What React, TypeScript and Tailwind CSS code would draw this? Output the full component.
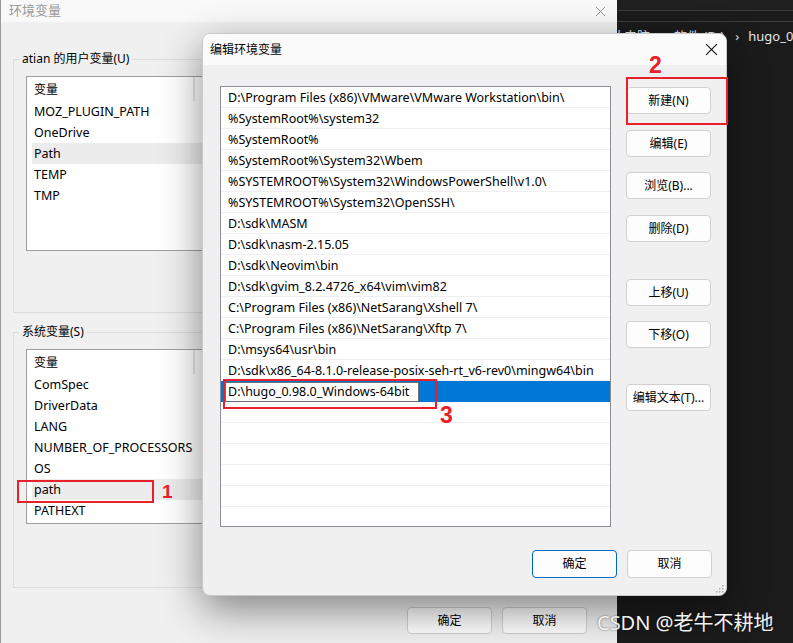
import React from "react";

const userVars = ["MOZ_PLUGIN_PATH", "OneDrive", "Path", "TEMP", "TMP"];
const sysVars = ["ComSpec", "DriverData", "LANG", "NUMBER_OF_PROCESSORS", "OS", "path", "PATHEXT"];

const paths = [
  "D:\\Program Files (x86)\\VMware\\VMware Workstation\\bin\\",
  "%SystemRoot%\\system32",
  "%SystemRoot%",
  "%SystemRoot%\\System32\\Wbem",
  "%SYSTEMROOT%\\System32\\WindowsPowerShell\\v1.0\\",
  "%SYSTEMROOT%\\System32\\OpenSSH\\",
  "D:\\sdk\\MASM",
  "D:\\sdk\\nasm-2.15.05",
  "D:\\sdk\\Neovim\\bin",
  "D:\\sdk\\gvim_8.2.4726_x64\\vim\\vim82",
  "C:\\Program Files (x86)\\NetSarang\\Xshell 7\\",
  "C:\\Program Files (x86)\\NetSarang\\Xftp 7\\",
  "D:\\msys64\\usr\\bin",
  "D:\\sdk\\x86_64-8.1.0-release-posix-seh-rt_v6-rev0\\mingw64\\bin",
];

function CloseIcon({ color, size }: { color: string; size: number }) {
  return (
    <svg width={size} height={size} viewBox="0 0 12 12">
      <path d="M1 1 L11 11 M11 1 L1 11" stroke={color} strokeWidth="1" fill="none" />
    </svg>
  );
}

function VarList({ items, selected }: { items: string[]; selected: string }) {
  return (
    <div className="mt-[9px] ml-[12px] w-[565px] h-[175px] bg-white border border-[#a0a0a0] overflow-hidden text-[12.5px]">
      {/* 表头 */}
      <div className="h-[24px] flex">
        <div className="w-[168px] h-full flex items-center pl-[7px] pt-[1px] border-r-2 border-[#e6e6e6] text-[12px]">变量</div>
      </div>
      {items.map((name) => (
        <div
          key={name}
          className={`h-[21px] ml-[5px] pl-[2px] pt-[2px] flex items-center ${name === selected ? "bg-[#ececec]" : ""}`}
        >
          {name}
        </div>
      ))}
    </div>
  );
}

function WinButton({ label, primary, className = "" }: { label: string; primary?: boolean; className?: string }) {
  return (
    <div
      className={`w-[85px] h-[27px] rounded-[4px] bg-[#fdfdfd] flex items-center justify-center text-[12px] text-black border ${
        primary ? "border-[#0067c0]" : "border-[#d0d0d0]"
      } ${className}`}
    >
      {label}
    </div>
  );
}

export default function App() {
  return (
    <div className="relative w-[793px] h-[643px] overflow-hidden bg-[#f0f0f0] text-[12px] text-black font-['Segoe_UI','Noto_Sans','Noto_Sans_CJK_SC',sans-serif]">
      {/* 背景：环境变量窗口 */}
      <div className="absolute left-0 top-0 w-[617px] h-[643px] bg-[#f0f0f0] flex flex-col border-l border-[#9a9a9a]">
        <div className="h-[22px] bg-[#f9f9f9] flex items-center justify-between pl-[8px] pr-[11px]">
          <span className="text-[13px] text-[#9a9a9a]">环境变量</span>
          <CloseIcon color="#8a8a8a" size={11} />
        </div>

        <fieldset className="mt-[29px] ml-[12px] w-[591px] h-[262px] border border-[#dcdcdc]">
          <legend className="ml-[5px] px-[3px] leading-[16px]">atian 的用户变量(U)</legend>
          <VarList items={userVars} selected="Path" />
        </fieldset>

        <fieldset className="mt-[11px] ml-[12px] w-[591px] h-[264px] border border-[#dcdcdc]">
          <legend className="ml-[5px] px-[3px] leading-[16px]">系统变量(S)</legend>
          <VarList items={sysVars} selected="path" />
        </fieldset>

        <div className="mt-[19px] flex justify-end gap-[10px] pr-[30px]">
          <WinButton label="确定" className="bg-[#f7f7f7] border-[#c4c4c4]" />
          <WinButton label="取消" className="bg-[#f7f7f7] border-[#c4c4c4]" />
        </div>
      </div>

      {/* 右侧深色资源管理器 */}
      <div className="absolute left-[617px] top-0 w-[176px] h-[643px] bg-[#1b1b1b] overflow-hidden">
        <div className="h-[11px] bg-[#202020] border-b border-[#3c3c3c]" />
        <div className="h-[11px] border-b border-[#3c3c3c]" />
        <div className="mt-[5px] -ml-[6px] flex items-center whitespace-nowrap text-[13px] text-[#e6e6e6] font-['Noto_Sans','Noto_Sans_CJK_SC',sans-serif]">
          <span>此电脑</span>
          <span className="ml-[10px]">›</span>
          <span className="ml-[10px]">软件 (D:)</span>
          <span className="ml-[11px]">›</span>
          <span className="ml-[9px]">hugo_0.98.0_Windows-64bit</span>
        </div>
      </div>

      {/* 编辑环境变量 对话框 */}
      <div className="absolute left-[202px] top-[33px] w-[525px] h-[563px] rounded-[8px] bg-[#f0f0f0] border border-[#c9c9c9] overflow-hidden shadow-[0_14px_40px_rgba(0,0,0,0.45)] flex flex-col">
        <div className="h-[31px] bg-[#fbfbfb] flex items-center justify-between pl-[7px] pr-[8px]">
          <span className="text-[12px]">编辑环境变量</span>
          <CloseIcon color="#111" size={13} />
        </div>

        <div className="flex pl-[17px] pt-[21px]">
          <div className="w-[391px] h-[441px] bg-white border border-[#8a8e96] overflow-hidden text-[12.5px]">
            {paths.map((p) => (
              <div key={p} className="h-[21px] border-b border-[#efefef] flex items-center pl-[7px] pt-[2px] whitespace-nowrap">
                {p}
              </div>
            ))}
            {/* 正在编辑的行 */}
            <div className="h-[21px] bg-[#0078d7] flex items-center pl-[4px]">
              <div className="w-[194px] h-[20px] bg-white border border-[#6e6e6e] flex items-center pl-[2px] pt-[2px]">
                D:\hugo_0.98.0_Windows-64bit
              </div>
            </div>
            {Array.from({ length: 6 }).map((_, i) => (
              <div key={i} className="h-[21px] border-b border-[#efefef]" />
            ))}
          </div>

          <div className="ml-[15px] pt-[1px] flex flex-col">
            <WinButton label="新建(N)" />
            <WinButton label="编辑(E)" className="mt-[16px]" />
            <WinButton label="浏览(B)..." className="mt-[15px]" />
            <WinButton label="删除(D)" className="mt-[16px]" />
            <WinButton label="上移(U)" className="mt-[37px]" />
            <WinButton label="下移(O)" className="mt-[15px]" />
            <WinButton label="编辑文本(T)..." className="mt-[36px]" />
          </div>
        </div>

        <div className="mt-[23px] flex justify-end gap-[10px] pr-[14px]">
          <WinButton label="确定" primary className="h-[28px]" />
          <WinButton label="取消" className="h-[28px]" />
        </div>

        <svg className="absolute right-[2px] bottom-[2px]" width="8" height="8" viewBox="0 0 8 8">
          <rect x="6" y="0" width="1.5" height="1.5" fill="#a8a8a8" />
          <rect x="3" y="3" width="1.5" height="1.5" fill="#a8a8a8" />
          <rect x="6" y="3" width="1.5" height="1.5" fill="#a8a8a8" />
          <rect x="0" y="6" width="1.5" height="1.5" fill="#a8a8a8" />
          <rect x="3" y="6" width="1.5" height="1.5" fill="#a8a8a8" />
          <rect x="6" y="6" width="1.5" height="1.5" fill="#a8a8a8" />
        </svg>
      </div>

      {/* 红色标注 */}
      <div className="absolute left-[17px] top-[480px] w-[137px] h-[23px] border-2 border-[#e8202a]" />
      <div className="absolute left-[162px] top-[478px] text-[19px] leading-[28px] font-bold text-[#e8202a] font-['Liberation_Sans',sans-serif]">1</div>
      <div className="absolute left-[626px] top-[77px] w-[102px] h-[48px] border-2 border-[#e8202a]" />
      <div className="absolute left-[649px] top-[50px] text-[23px] leading-[30px] font-bold text-[#e8202a] font-['Liberation_Sans',sans-serif]">2</div>
      <div className="absolute left-[223px] top-[379px] w-[214px] h-[30px] border-2 border-[#e8202a]" />
      <div className="absolute left-[440px] top-[400px] text-[23px] leading-[30px] font-bold text-[#e8202a] font-['Liberation_Sans',sans-serif]">3</div>

      {/* 水印 */}
      <div className="absolute left-[597px] top-[608px] text-[20px] leading-[30px] text-[#f2f2f2] whitespace-nowrap [text-shadow:0_0_2px_rgba(0,0,0,0.6)] font-['Noto_Sans','Noto_Sans_CJK_SC',sans-serif]">
        CSDN @老牛不耕地
      </div>
    </div>
  );
}
